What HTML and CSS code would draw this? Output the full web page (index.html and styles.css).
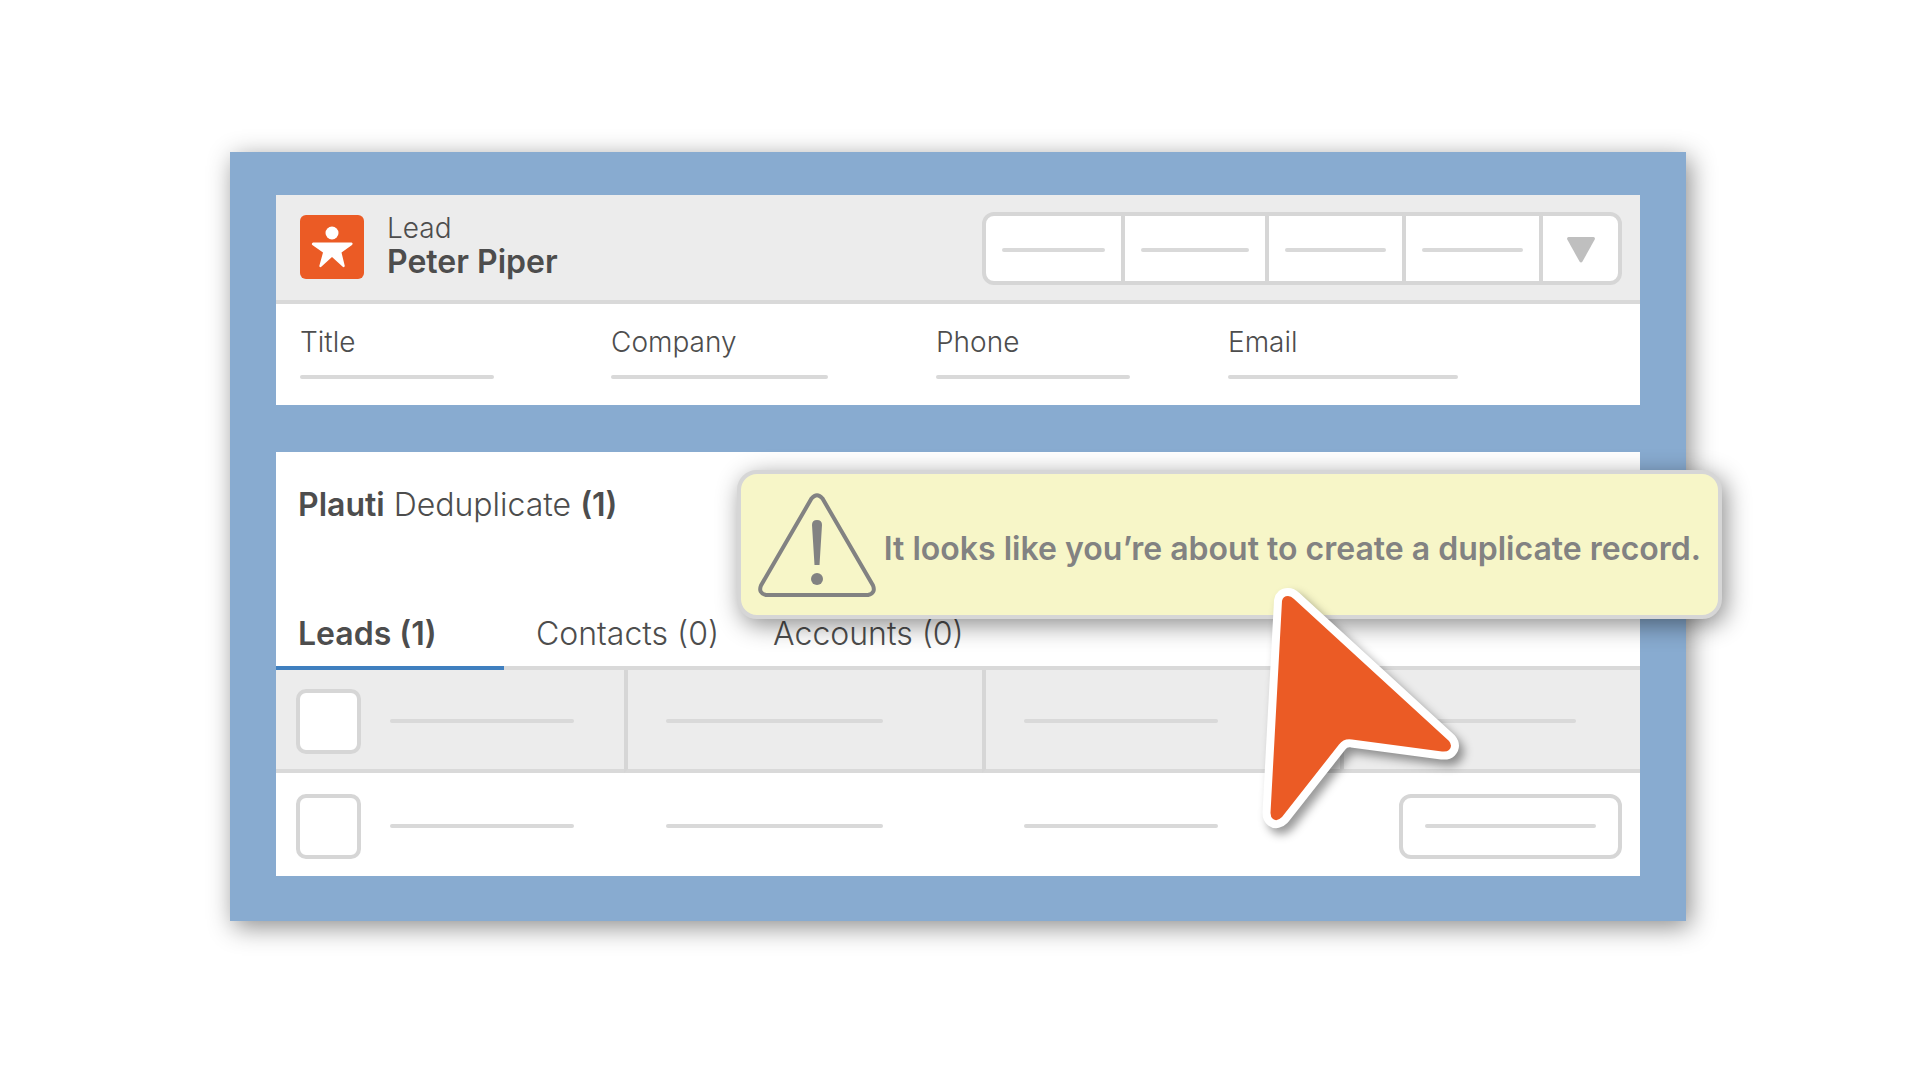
FILE: index.html
```html
<!DOCTYPE html>
<html lang="en">
<head>
<meta charset="utf-8">
<meta name="viewport" content="width=device-width, initial-scale=1">
<title>Lead – Peter Piper</title>
<link rel="stylesheet" href="styles.css">
</head>
<body>
<main class="frame">
  <section class="card">
    <header class="lead-header">
      <svg class="lead-icon" viewBox="0 0 64 64" aria-hidden="true">
        <rect width="64" height="64" rx="6" fill="#eb5b25"/>
        <circle cx="32" cy="18" r="6.500" fill="#fff"/>
        <path d="M13 27.500H51.500Q53.500 28.500 52 30L41.500 37.500L44.800 51Q44.500 52.500 43 52L32 42L21 52Q19.300 52.500 19.300 51L23 37.500L12.300 30Q11 28.500 13 27.500Z" fill="#fff"/>
      </svg>
      <div class="lead-name">
        <p class="lead-type">Lead</p>
        <h1 class="lead-title">Peter Piper</h1>
      </div>
      <div class="actions">
        <button class="action action-a" type="button" aria-label="Action 1"><span class="line"></span></button>
        <button class="action action-b" type="button" aria-label="Action 2"><span class="line"></span></button>
        <button class="action action-c" type="button" aria-label="Action 3"><span class="line"></span></button>
        <button class="action action-c" type="button" aria-label="Action 4"><span class="line"></span></button>
        <button class="action action-more" type="button" aria-label="More actions">
          <svg class="caret" viewBox="0 0 28 26" aria-hidden="true"><path d="M1.500 0H26.500Q28.500 0.500 27.700 2.500L15.500 24.500Q14 26.500 12.500 24.500L0.300 2.500Q-0.500 0.500 1.500 0Z" fill="#bfbfbf"/></svg>
        </button>
      </div>
    </header>
    <dl class="fields">
      <div class="field"><dt>Title</dt><dd class="line line-m"></dd></div>
      <div class="field"><dt>Company</dt><dd class="line line-l"></dd></div>
      <div class="field"><dt>Phone</dt><dd class="line line-m"></dd></div>
      <div class="field"><dt>Email</dt><dd class="line line-xl"></dd></div>
    </dl>
  </section>

  <section class="card">
    <h2 class="panel-title"><b>Plauti</b> Deduplicate <b>(1)</b></h2>
    <div class="tabs" role="tablist">
      <button class="tab tab-active" type="button" role="tab" aria-selected="true">Leads (1)</button>
      <button class="tab" type="button" role="tab" aria-selected="false">Contacts (0)</button>
      <button class="tab" type="button" role="tab" aria-selected="false">Accounts (0)</button>
    </div>
    <table class="records">
      <thead>
        <tr>
          <th class="col-pick"><div class="pick"><input class="check" type="checkbox" aria-label="Select all"><span class="line line-s"></span></div></th>
          <th class="col-mid"><span class="line line-l"></span></th>
          <th class="col-mid"><span class="line line-m"></span></th>
          <th class="col-end"><span class="line line-m"></span></th>
        </tr>
      </thead>
      <tbody>
        <tr>
          <td class="col-pick"><div class="pick"><input class="check" type="checkbox" aria-label="Select record"><span class="line line-s"></span></div></td>
          <td class="col-mid"><span class="line line-l"></span></td>
          <td class="col-mid"><span class="line line-m"></span></td>
          <td class="col-act"><button class="row-action" type="button" aria-label="Record action"><span class="line"></span></button></td>
        </tr>
      </tbody>
    </table>
  </section>

  <div class="alert" role="alert">
    <svg class="alert-icon" viewBox="0 0 118 104" aria-hidden="true">
      <path d="M53.500 5.500Q59 -1 64.500 5.500L115 92.500Q118 100 110 102H8Q0 100 3 92.500Z" fill="none" stroke="#828282" stroke-width="4"/>
      <path d="M54 32Q54 27 59 27T64 32L61.500 72H56.500Z" fill="#828282"/>
      <circle cx="59" cy="86" r="6" fill="#828282"/>
    </svg>
    <p class="alert-text">It looks like you’re about to create a duplicate record.</p>
  </div>

  <svg class="pointer" viewBox="0 0 210 260" aria-hidden="true">
    <path d="M32 22Q33 17 38 17Q41 17 44 20L199 162Q203 167 199 171Q197 173 192 172.500L102 160.500Q94 159 89 165.500L32 238Q27 243 23 240Q20.500 238 20.500 234Z" fill="#eb5b25" stroke="#fff" stroke-width="16" stroke-linejoin="round" paint-order="stroke"/>
  </svg>
</main>
</body>
</html>
```
FILE: styles.css
```css
* {
  box-sizing: border-box;
}

body {
  margin: 0;
  padding: 152px 234px 152px 230px;
  background: #fff;
  color: #4d4d4d;
  font-family: Inter, "Liberation Sans", sans-serif;
  font-size: 28px;
  font-weight: 300;
  line-height: 32px;
}

h1, h2, p, dl, dd {
  margin: 0;
}

button {
  font: inherit;
  color: inherit;
  padding: 0;
}

.frame {
  position: relative;
  display: flex;
  flex-direction: column;
  gap: 47px;
  padding: 43px 46px 45px;
  background: #88abd0;
  box-shadow: 4px 6px 24px rgba(0, 0, 0, 0.45);
}

.card {
  background: #fff;
}

.line {
  display: block;
  height: 4px;
  border-radius: 2px;
  background: #d9d9d9;
}

.line-s { width: 184px; }
.line-m { width: 194px; }
.line-l { width: 217px; }
.line-xl { width: 230px; }

.lead-header {
  display: flex;
  align-items: flex-start;
  padding: 17px 18px 15px 24px;
  background: #ececec;
  border-bottom: 4px solid #d9d9d9;
}

.lead-icon {
  width: 64px;
  height: 64px;
  margin-top: 3px;
}

.lead-name {
  flex: 1;
  padding-left: 23px;
}

.lead-title {
  font-size: 32px;
  font-weight: 600;
  line-height: 36px;
}

.actions {
  display: flex;
  height: 73px;
  border: 4px solid #d6d6d6;
  border-radius: 12px;
  background: #fff;
}

.action {
  display: flex;
  align-items: center;
  border: 0;
  border-right: 4px solid #d6d6d6;
  background: none;
  padding: 2px 16px 0;
}

.action .line {
  flex: 1;
}

.action-a { width: 139px; }
.action-b { width: 144px; }
.action-c { width: 137px; }

.action-more {
  width: 75px;
  justify-content: center;
  border-right: 0;
}

.caret {
  width: 28px;
  height: 26px;
}

.fields {
  display: grid;
  grid-template-columns: 311fr 325fr 292fr 412fr;
  padding: 22px 0 26px 24px;
}

.field {
  display: flex;
  flex-direction: column;
  gap: 17px;
}

.panel-title {
  padding: 35px 22px 0;
  font-size: 32px;
  font-weight: 300;
  line-height: 36px;
}

.panel-title b {
  font-weight: 600;
}

.tabs {
  display: flex;
  padding-top: 89px;
  border-bottom: 4px solid #d9d9d9;
}

.tab {
  margin-bottom: -4px;
  padding: 4px 30px 14px 24px;
  border: 0;
  border-bottom: 4px solid transparent;
  background: none;
  font-size: 32px;
  line-height: 36px;
}

.tab-active {
  width: 228px;
  margin-right: 8px;
  padding-left: 22px;
  border-bottom-color: #3f7fbf;
  font-weight: 600;
  text-align: left;
}

.records {
  width: 100%;
  border-collapse: separate;
  border-spacing: 0;
  table-layout: fixed;
}

.records th,
.records td {
  padding: 3px 0 0;
}

.records th {
  height: 103px;
  background: #ececec;
  border-bottom: 4px solid #d9d9d9;
}

.records td {
  height: 103px;
}

.records th + th,
.records td + td {
  border-left: 4px solid transparent;
}

.records th + th {
  border-left-color: #d6d6d6;
}

.records .col-pick {
  width: 348px;
  padding-left: 20px;
}

.records .col-mid {
  width: 358px;
  padding-left: 38px;
}

.records .col-end {
  padding-left: 38px;
}

.pick {
  display: flex;
  align-items: center;
  gap: 29px;
}

.check {
  appearance: none;
  width: 65px;
  height: 65px;
  margin: 0;
  border: 4px solid #d6d6d6;
  border-radius: 10px;
  background: #fff;
}

.records .col-act {
  padding-right: 18px;
}

.row-action {
  display: block;
  width: 223px;
  height: 65px;
  margin-left: auto;
  padding: 0 22px;
  border: 4px solid #d6d6d6;
  border-radius: 12px;
  background: #fff;
}

/* Alert and pointer float over the cards */
.alert {
  position: absolute;
  top: 318px;
  right: -36px;
  display: flex;
  align-items: center;
  gap: 8px;
  height: 149px;
  padding: 0 17px;
  border: 4px solid #d6d6d6;
  border-radius: 20px;
  background: #f7f6c8;
  box-shadow: 4px 6px 24px rgba(0, 0, 0, 0.45);
  color: #828282;
}

.alert-icon {
  flex: none;
  width: 118px;
  height: 104px;
}

.alert-text {
  padding-top: 8px;
  font-size: 32px;
  font-weight: 600;
  line-height: 36px;
  white-space: nowrap;
}

.pointer {
  position: absolute;
  top: 427px;
  right: 226px;
  width: 210px;
  height: 260px;
  overflow: visible;
  filter: drop-shadow(5px 6px 5px rgba(0, 0, 0, 0.4));
}
```
